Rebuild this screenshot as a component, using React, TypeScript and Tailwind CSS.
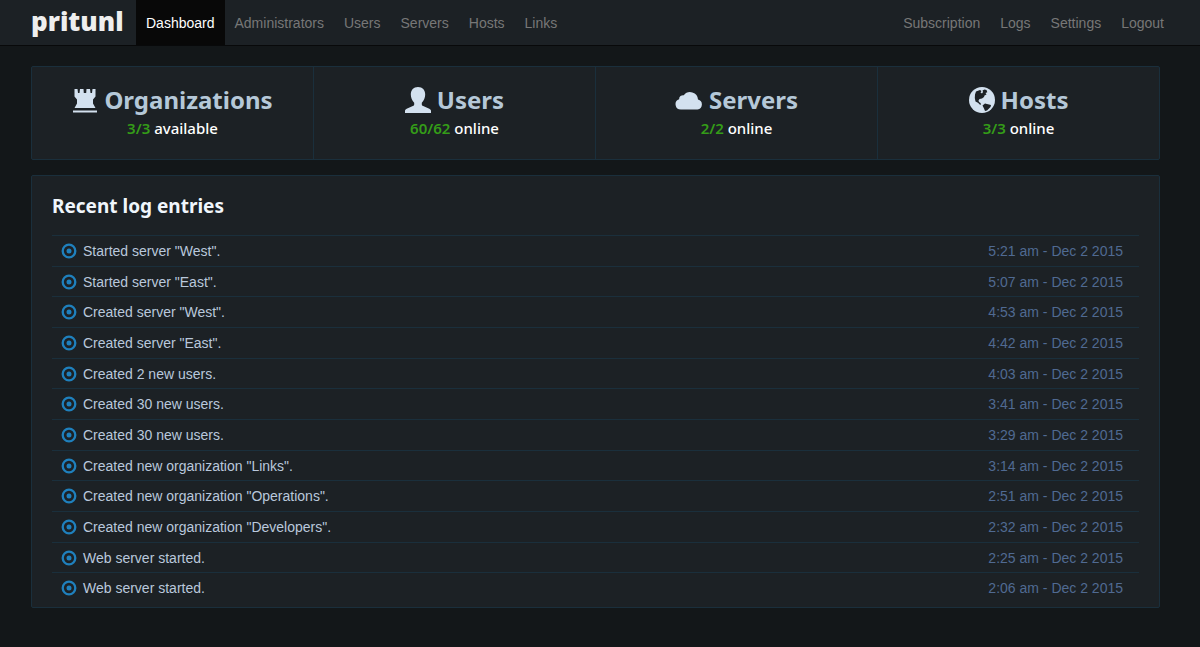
import type { ReactNode } from 'react'

const leftLinks = ['Administrators', 'Users', 'Servers', 'Hosts', 'Links']
const rightLinks = ['Subscription', 'Logs', 'Settings', 'Logout']

const entries = [
  { message: 'Started server "West".', time: '5:21 am - Dec 2 2015' },
  { message: 'Started server "East".', time: '5:07 am - Dec 2 2015' },
  { message: 'Created server "West".', time: '4:53 am - Dec 2 2015' },
  { message: 'Created server "East".', time: '4:42 am - Dec 2 2015' },
  { message: 'Created 2 new users.', time: '4:03 am - Dec 2 2015' },
  { message: 'Created 30 new users.', time: '3:41 am - Dec 2 2015' },
  { message: 'Created 30 new users.', time: '3:29 am - Dec 2 2015' },
  { message: 'Created new organization "Links".', time: '3:14 am - Dec 2 2015' },
  { message: 'Created new organization "Operations".', time: '2:51 am - Dec 2 2015' },
  { message: 'Created new organization "Developers".', time: '2:32 am - Dec 2 2015' },
  { message: 'Web server started.', time: '2:25 am - Dec 2 2015' },
  { message: 'Web server started.', time: '2:06 am - Dec 2 2015' },
]

function TowerIcon() {
  return (
    <svg viewBox="0 0 26 26" className="size-[26px]" fill="currentColor" aria-hidden="true">
      <path d="M2.500 2h3l.5 4h1.500l.5-4h3.500l.3 4h2.400l.3-4H18l.5 4H20l.5-4h3v7.500l-2.500 3v4l2.500 4.500h-21L5 16.500v-4l-2.500-3z" />
      <path d="M1 23.500h24v2H1z" />
    </svg>
  )
}

function UserIcon() {
  return (
    <svg viewBox="0 0 26 26" className="size-[26px]" fill="currentColor" aria-hidden="true">
      <path d="M13 0c4.500 0 7.200 3 7.200 7.500 0 3-1.300 6.300-3.400 8.300v1.400c0 1 .5 1.500 1.400 1.900l6.100 2.700c1.100.5 1.700 1.200 1.700 2.200v2H0v-2c0-1 .6-1.700 1.700-2.200l6.100-2.700c.9-.4 1.400-.9 1.400-1.900v-1.400C7.100 13.800 5.800 10.500 5.800 7.500 5.800 3 8.500 0 13 0z" />
    </svg>
  )
}

function CloudIcon() {
  return (
    <svg viewBox="0 0 28 26" className="h-[26px] w-7" fill="currentColor" aria-hidden="true">
      <path d="M6 22.500a5.300 5.300 0 0 1-1.900-10.300 4 4 0 0 1 4.700-4A7.900 7.900 0 0 1 23 12.500 5.100 5.100 0 0 1 22.500 22.500z" />
    </svg>
  )
}

function GlobeIcon() {
  return (
    <svg viewBox="0 0 26 26" className="size-[26px]" aria-hidden="true">
      <circle cx="13" cy="13" r="13" fill="currentColor" />
      <path
        d="M7 4.500l4-1.500 1.500 1-1 1.500 1.500 1 1-1.500-.5-1.500 2-1 2 .5.8 2.200-1.800.8 1 1.500-2 1-.5 1.500-2 1.500-2.500.5-1 1.500.5 1.500 1.500 1 .5 1.500-1 .2-2-2-2.500-1.200-.7-3.500.2-3.500z"
        fill="#1c2125"
      />
      <path d="M13.500 18.500l2.500-2 6 1.500-.5 2-3.500 3.500-2 .5-1-2.500z" fill="#1c2125" />
    </svg>
  )
}

function RecordIcon() {
  return (
    <svg viewBox="0 0 16 16" className="size-4" aria-hidden="true">
      <circle cx="8" cy="8" r="6.300" fill="none" stroke="#1f80bd" strokeWidth="2.300" />
      <circle cx="8" cy="8" r="2.500" fill="#1f80bd" />
    </svg>
  )
}

function NavLink({ children }: { children: ReactNode }) {
  return (
    <a href="#" className="px-[10px] text-[#777] hover:text-white">
      {children}
    </a>
  )
}

type StatProps = { icon: ReactNode; title: string; count: string; label: string }

function Stat({ icon, title, count, label }: StatProps) {
  return (
    <div className="flex-1 border-l border-[#1a2f3c] pt-[17px] text-center font-['Noto_Sans',sans-serif] first:border-l-0">
      <h2 className="flex items-center justify-center gap-[6px] text-2xl leading-8 font-bold text-[#b5c8d8]">
        <span className="text-[#d3e1ef]">{icon}</span>
        {title}
      </h2>
      <p className="text-[15px] leading-6 font-medium text-white">
        <span className="font-semibold text-[#349c18]">{count}</span> {label}
      </p>
    </div>
  )
}

export default function App() {
  return (
    <div className="min-h-screen bg-[#131719] font-['Liberation_Sans',Arial,sans-serif] text-sm">
      <header className="flex h-[46px] items-center border-b border-[#08090a] bg-[#1c2125] pr-[26px] pl-[31px]">
        <a href="#" className="w-[105px] pb-1 font-['Noto_Sans',sans-serif] text-[26px] leading-9 font-black text-[#eee]">
          pritunl
        </a>
        <nav className="flex flex-1 items-center self-stretch">
          <a href="#" className="flex items-center self-stretch bg-[#080808] px-[10px] text-white">
            Dashboard
          </a>
          {leftLinks.map((link) => (
            <NavLink key={link}>{link}</NavLink>
          ))}
          <div className="ml-auto flex">
            {rightLinks.map((link) => (
              <NavLink key={link}>{link}</NavLink>
            ))}
          </div>
        </nav>
      </header>

      <main className="pt-5 pr-10 pb-[38px] pl-[31px]">
        <section className="flex h-[94px] rounded-xs border border-[#1a2f3c] bg-[#1c2125]">
          <Stat icon={<TowerIcon />} title="Organizations" count="3/3" label="available" />
          <Stat icon={<UserIcon />} title="Users" count="60/62" label="online" />
          <Stat icon={<CloudIcon />} title="Servers" count="2/2" label="online" />
          <Stat icon={<GlobeIcon />} title="Hosts" count="3/3" label="online" />
        </section>

        <section className="mt-[15px] rounded-xs border border-[#1a2f3c] bg-[#1c2125] px-5 pt-4 pb-1">
          <h3 className="mb-[15px] font-['Noto_Sans',sans-serif] text-[19px] leading-7 font-bold text-[#f0f6fc]">
            Recent log entries
          </h3>
          <table className="h-[368px] w-full">
            <tbody>
              {entries.map((entry, i) => (
                <tr key={i} className="border-t border-[#1a2f3c]">
                  <td className="pl-[9px] text-[#b9c8dc]">
                    <div className="flex items-center gap-[6px]">
                      <RecordIcon />
                      {entry.message}
                    </div>
                  </td>
                  <td className="pr-4 text-right text-[#506a92]">{entry.time}</td>
                </tr>
              ))}
            </tbody>
          </table>
        </section>
      </main>
    </div>
  )
}
